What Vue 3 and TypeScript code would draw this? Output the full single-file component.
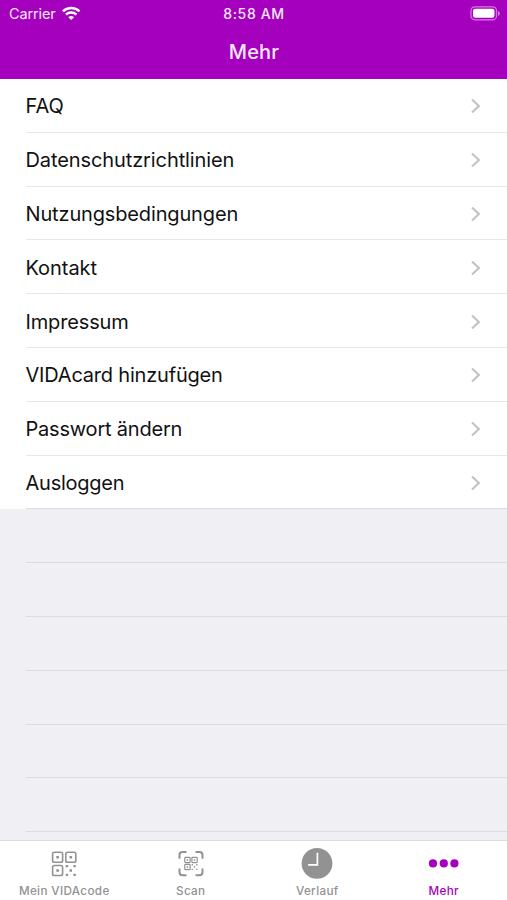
<script setup lang="ts">
interface Entry {
  label: string
  spacing: string
}

const entries: Entry[] = [
  { label: 'FAQ', spacing: '-0.1px' },
  { label: 'Datenschutzrichtlinien', spacing: '-0.1px' },
  { label: 'Nutzungsbedingungen', spacing: '-0.15px' },
  { label: 'Kontakt', spacing: '-0.05px' },
  { label: 'Impressum', spacing: '-0.15px' },
  { label: 'VIDAcard hinzufügen', spacing: '-0.2px' },
  { label: 'Passwort ändern', spacing: '-0.2px' },
  { label: 'Ausloggen', spacing: '-0.25px' },
]
const emptyRows = 6
</script>

<template>
  <div class="screen">
    <header class="header">
      <div class="status">
        <div class="carrier">
          <span>Carrier</span>
          <svg width="19" height="15" viewBox="0 0 19 15" fill="none" stroke="#fff" stroke-width="2.4">
            <path d="M.9 5.4C5.6 .9 12.8 .9 17.5 5.4" />
            <path d="M3.9 8.6C6.9 5.8 11.5 5.8 14.5 8.6" />
            <path d="M6.3 11.2C8 9.5 10.4 9.5 12.1 11.2L9.2 14.1Z" fill="#fff" stroke="none" />
          </svg>
        </div>
        <span class="time">8:58 AM</span>
        <svg class="battery" width="31" height="15" viewBox="0 0 31 15">
          <rect x="1" y=".8" width="25.5" height="13" rx="3.8" fill="none" stroke="#d37ce0" stroke-width="1.2" />
          <rect x="3" y="2.8" width="21.5" height="9" rx="2.2" fill="#fff" />
          <path d="M28 5v5c2.5-1 2.5-4 0-5z" fill="#d37ce0" />
        </svg>
      </div>
      <h1>Mehr</h1>
    </header>

    <main class="list">
      <div v-for="entry in entries" :key="entry.label" class="row filled">
        <div class="cell">
          <span :style="{ letterSpacing: entry.spacing }">{{ entry.label }}</span>
          <svg width="12" height="18" viewBox="0 0 12 18" fill="none" stroke="#c2c2c5" stroke-width="2.1">
            <path d="M2 2.4L8.9 9L2 15.6" />
          </svg>
        </div>
      </div>
      <div v-for="n in emptyRows" :key="n" class="row">
        <div class="cell"></div>
      </div>
    </main>

    <nav class="tabs">
      <div class="tab">
        <svg width="32" height="32" viewBox="0 0 32 32" fill="none" stroke="#929292" stroke-width="1.6">
          <rect x="4.6" y="4.3" width="10" height="10" rx="1.8" />
          <rect x="17.8" y="4.3" width="10" height="10" rx="1.8" />
          <rect x="4.6" y="17.5" width="10" height="10" rx="1.8" />
          <path d="M8.3 9.3h2.6M21.5 9.3h2.6M8.3 22.5h2.6" stroke-width="2.6" />
          <path d="M17.7 18.1h2.4M25.4 18.1h2.4M21.5 22.5h2.5M17.7 26.9h2.4M25.4 26.9h2.4" stroke-width="2.4" />
        </svg>
        <span>Mein VIDAcode</span>
      </div>
      <div class="tab">
        <svg width="32" height="32" viewBox="0 0 32 32" fill="none" stroke="#929292">
          <path d="M4.5 10.8V7.1Q4.5 4 7.6 4H11.5M20.5 4H24.4Q27.5 4 27.5 7.1V10.8M27.5 20.5V24.2Q27.5 27.3 24.4 27.3H20.5M11.5 27.3H7.6Q4.5 27.3 4.5 24.2V20.5" stroke-width="2" />
          <g stroke-width="1.2">
            <rect x="9.8" y="9.3" width="5.3" height="5.3" rx=".8" />
            <rect x="16.9" y="9.3" width="5.3" height="5.3" rx=".8" />
            <rect x="9.8" y="16.4" width="5.3" height="5.3" rx=".8" />
            <path d="M11.7 11.95h1.5M18.8 11.95h1.5M11.7 19.05h1.5M16.6 16.7h1.3M21.2 16.7h1.3M18.9 19.05h1.3M16.6 21.4h1.3M21.2 21.4h1.3" stroke-width="1.4" />
          </g>
        </svg>
        <span>Scan</span>
      </div>
      <div class="tab">
        <svg width="32" height="32" viewBox="0 0 32 32">
          <circle cx="16" cy="15.4" r="15.4" fill="#929292" />
          <path d="M16.4 4.7V16.9H7.2" fill="none" stroke="#fff" stroke-width="1.7" />
        </svg>
        <span>Verlauf</span>
      </div>
      <div class="tab active">
        <svg width="32" height="32" viewBox="0 0 32 32" fill="#a500bd">
          <circle cx="5" cy="15.4" r="4.1" />
          <circle cx="15.8" cy="15.4" r="4.1" />
          <circle cx="26.4" cy="15.4" r="4.1" />
        </svg>
        <span>Mehr</span>
      </div>
    </nav>
  </div>
</template>

<style>
body {
  margin: 0;
}
</style>

<style scoped>
.screen {
  width: 507px;
  height: 900px;
  overflow: hidden;
  display: flex;
  flex-direction: column;
  background: #efeff4;
  font-family: Inter, "Liberation Sans", sans-serif;
}
.header {
  height: 79px;
  flex: none;
  background: #a500bd;
  color: #fbe9fd;
}
.status {
  height: 27px;
  padding: 0 6px 0 9px;
  display: grid;
  grid-template-columns: 1fr auto 1fr;
  align-items: center;
  font-size: 14.5px;
}
.carrier {
  display: flex;
  align-items: center;
  gap: 6px;
  letter-spacing: -0.12px;
}
.carrier svg {
  margin-top: -1px;
}
.time {
  margin-left: -2px;
  font-size: 14px;
  font-weight: 500;
  letter-spacing: 0.65px;
}
.battery {
  justify-self: end;
}
h1 {
  margin: 0;
  height: 50px;
  padding-left: 1px;
  line-height: 51px;
  text-align: center;
  font-size: 20px;
  font-weight: 500;
  letter-spacing: 0.2px;
}
.list {
  flex: none;
  height: 760.5px;
  overflow: hidden;
}
.row {
  height: 53.8px;
  padding-left: 26px;
}
.filled {
  background: #fff;
}
.cell {
  box-sizing: border-box;
  height: 100%;
  display: flex;
  align-items: center;
  justify-content: space-between;
  padding: 2px 25px 0 0;
  border-bottom: 1px solid #dcdce0;
  color: #111;
  font-size: 20px;
  line-height: 26px;
}
.filled .cell {
  border-bottom-color: #e8e8ea;
}
.cell span {
  margin-left: -0.5px;
}
.filled:nth-child(8) .cell {
  border-bottom-color: #dcdce0;
}
.tabs {
  flex: none;
  box-sizing: border-box;
  height: 60.5px;
  border-top: 1px solid #dcdce0;
  background: #fff;
  display: grid;
  grid-template-columns: repeat(4, 126.5px);
}
.tab {
  box-sizing: border-box;
  padding: 7.5px 0 0 2px;
  display: flex;
  flex-direction: column;
  align-items: center;
  color: #929292;
  font-size: 11.7px;
  font-weight: 500;
  line-height: 16px;
  letter-spacing: 0.35px;
}
.tab span {
  margin-top: 3px;
}
.active {
  color: #a500bd;
}
</style>
